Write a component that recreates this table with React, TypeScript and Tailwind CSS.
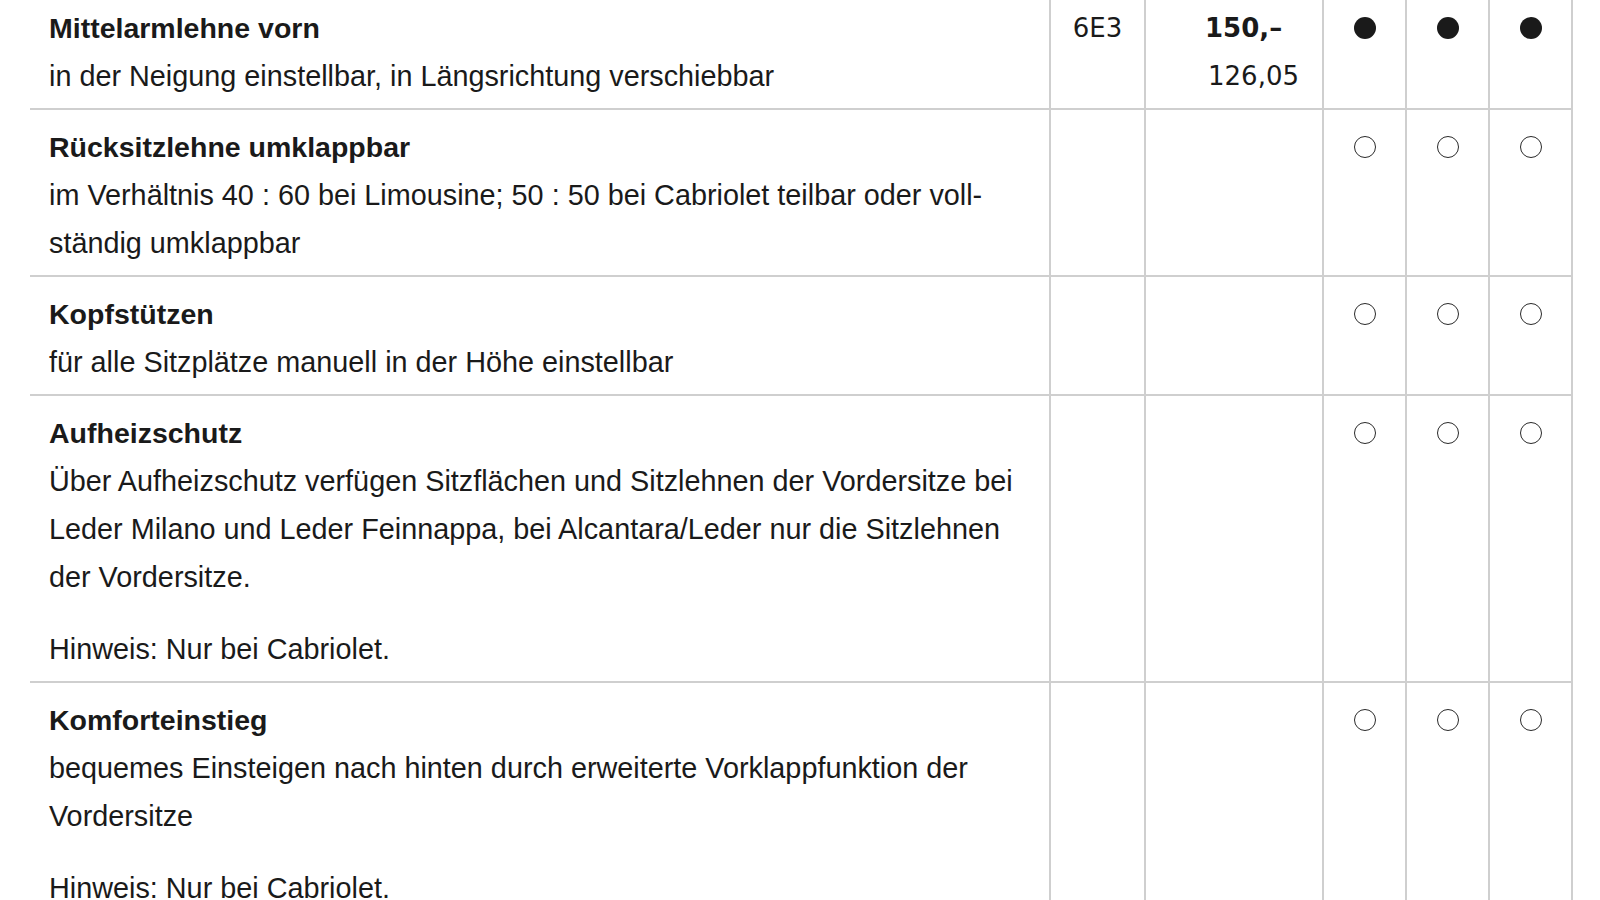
import React from "react";

type Mark = "full" | "open";

type Row = {
  title: string;
  lines: string[];
  note?: string;
  code?: string;
  price?: [string, string];
  marks: Mark[];
};

const rows: Row[] = [
  {
    title: "Mittelarmlehne vorn",
    lines: ["in der Neigung einstellbar, in Längsrichtung verschiebbar"],
    code: "6E3",
    price: ["150,–", "126,05"],
    marks: ["full", "full", "full"],
  },
  {
    title: "Rücksitzlehne umklappbar",
    lines: [
      "im Verhältnis 40 : 60 bei Limousine; 50 : 50 bei Cabriolet teilbar oder voll-",
      "ständig umklappbar",
    ],
    marks: ["open", "open", "open"],
  },
  {
    title: "Kopfstützen",
    lines: ["für alle Sitzplätze manuell in der Höhe einstellbar"],
    marks: ["open", "open", "open"],
  },
  {
    title: "Aufheizschutz",
    lines: [
      "Über Aufheizschutz verfügen Sitzflächen und Sitzlehnen der Vordersitze bei",
      "Leder Milano und Leder Feinnappa, bei Alcantara/Leder nur die Sitzlehnen",
      "der Vordersitze.",
    ],
    note: "Hinweis: Nur bei Cabriolet.",
    marks: ["open", "open", "open"],
  },
  {
    title: "Komforteinstieg",
    lines: [
      "bequemes Einsteigen nach hinten durch erweiterte Vorklappfunktion der",
      "Vordersitze",
    ],
    note: "Hinweis: Nur bei Cabriolet.",
    marks: ["open", "open", "open"],
  },
];

function Dot({ mark }: { mark: Mark }) {
  if (mark === "full") {
    return <div className="mt-[26px] h-[22px] w-[22px] rounded-full bg-[#1a1a1a]" />;
  }
  return (
    <div className="mt-[26px] h-[22px] w-[22px] rounded-full border-[1.5px] border-[#2a2a2a]" />
  );
}

export default function App() {
  return (
    <div className="min-h-[900px] w-[1600px] overflow-hidden bg-white text-[#1a1a1a]">
      <div className="ml-[30px] mt-[-9px] w-[1543px]">
        {rows.map((r, i) => (
          <div key={i} className="flex border-b-2 border-[#cfcfcf]">
            <div
              className="w-[1019px] shrink-0 pl-[19px] pt-[13px] pb-[8px] text-[28.8px] leading-[48px]"
              style={{ fontFamily: '"Liberation Sans", Arial, sans-serif' }}
            >
              <div className="whitespace-nowrap text-[28.5px] font-bold">{r.title}</div>
              {r.lines.map((l, j) => (
                <div key={j} className="whitespace-nowrap">
                  {l}
                </div>
              ))}
              {r.note && <div className="mt-[24px] whitespace-nowrap">{r.note}</div>}
            </div>
            <div
              className="w-[95px] shrink-0 border-l-2 border-[#cfcfcf] pt-[13px] text-center text-[26px] leading-[48px]"
              style={{ fontFamily: '"DejaVu Sans", sans-serif' }}
            >
              {r.code}
            </div>
            <div
              className="w-[178px] shrink-0 border-l-2 border-[#cfcfcf] pt-[13px] text-[26px] leading-[48px]"
              style={{ fontFamily: '"DejaVu Sans", sans-serif' }}
            >
              {r.price && (
                <>
                  <div className="pl-[59px] font-bold">{r.price[0]}</div>
                  <div className="pl-[62px]">{r.price[1]}</div>
                </>
              )}
            </div>
            {r.marks.map((m, k) => (
              <div
                key={k}
                className={
                  k === 2
                    ? "flex w-[85px] shrink-0 justify-center border-x-2 border-[#cfcfcf]"
                    : "flex w-[83px] shrink-0 justify-center border-l-2 border-[#cfcfcf]"
                }
              >
                <Dot mark={m} />
              </div>
            ))}
          </div>
        ))}
      </div>
    </div>
  );
}
